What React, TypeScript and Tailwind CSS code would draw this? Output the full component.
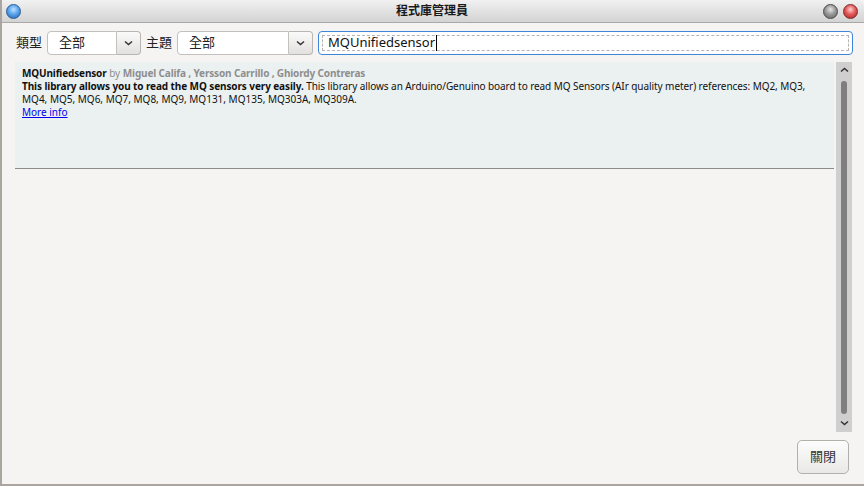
import React from "react";

const CJK = "font-['Noto_Sans','Noto_Sans_CJK_TC',sans-serif]";

function Orb({ tone }: { tone: "blue" | "gray" | "red" }) {
  const fill =
    tone === "blue"
      ? "bg-[radial-gradient(circle_at_50%_35%,#bfe0ff_0%,#5aa6ec_45%,#1d5fae_100%)] border-[#2b5d95]"
      : tone === "red"
        ? "bg-[radial-gradient(circle_at_50%_35%,#ffd0d0_0%,#e45a5a_45%,#a81d1d_100%)] border-[#7a2a2a]"
        : "bg-[radial-gradient(circle_at_50%_35%,#e6e6e6_0%,#9a9a9a_45%,#5e5e5e_100%)] border-[#4a4a4a]";
  return <div className={`h-[15px] w-[15px] rounded-full border ${fill}`} />;
}

function Chevron({ up = false }: { up?: boolean }) {
  return (
    <svg width="9" height="6" viewBox="0 0 9 6" className={up ? "rotate-180" : ""}>
      <path d="M1 1.5 L4.5 4.5 L8 1.5" fill="none" stroke="#333" strokeWidth="1.5" />
    </svg>
  );
}

function Combo({ width, value }: { width: string; value: string }) {
  return (
    <div className="flex h-[24px] items-stretch">
      <div
        className={`${width} flex items-center rounded-l-[4px] border border-[#c4c1bc] bg-white pl-[11px] text-[13px] text-[#222]`}
      >
        {value}
      </div>
      <div className="flex w-[24px] items-center justify-center rounded-r-[4px] border border-l-0 border-[#b9b6b1] bg-gradient-to-b from-[#fafafa] to-[#e2e1df]">
        <Chevron />
      </div>
    </div>
  );
}

export default function App() {
  return (
    <div className={`flex h-[486px] w-[864px] flex-col border-b-2 border-l-2 border-[#aaa59f] bg-[#f5f4f2] ${CJK}`}>
      <div className="grid h-[23px] grid-cols-[1fr_auto_1fr] items-center rounded-tr-[6px] border-b border-[#a9a9a9] bg-gradient-to-b from-[#f1f1f1] to-[#d3d3d3] pl-[4px] pr-[6px]">
        <Orb tone="blue" />
        <span className="text-[12px] font-bold text-[#1a1a1a]">程式庫管理員</span>
        <div className="flex justify-end gap-[5px]">
          <Orb tone="gray" />
          <Orb tone="red" />
        </div>
      </div>

      <div className="mt-[8px] flex items-center pl-[14px] pr-[11px]">
        <span className="mr-[5px] text-[13px] text-[#222]">類型</span>
        <Combo width="w-[70px]" value="全部" />
        <span className="ml-[5px] mr-[5px] text-[13px] text-[#222]">主題</span>
        <Combo width="w-[112px]" value="全部" />
        <div className="ml-[5px] flex h-[24px] flex-1 items-center rounded-[4px] border border-[#3d86d9] bg-white p-[3px]">
          <div className="flex h-[16px] flex-1 items-center border border-dashed border-[#b4b4b4] pl-[5px] text-[13px] text-[#111]">
            MQUnifiedsensor
            <span className="ml-[1px] h-[16px] w-[1px] bg-black" />
          </div>
        </div>
      </div>

      <div className="mt-[7px] flex h-[370px] pl-[13px] pr-[12px]">
        <div className="flex-1 pr-[2px]">
          <div className="h-[107px] border-b border-[#8c8c8c] bg-[#ebf0f0] pl-[7px] pt-[5px] text-[10px] leading-[13px] text-[#111] font-['Noto_Sans',sans-serif]">
            <div>
              <b className="tracking-[-0.15px]">MQUnifiedsensor</b> <span className="text-[#8e8e8e]">by</span>{" "}
              <b className="tracking-[-0.15px] text-[#8e8e8e]">Miguel Califa , Yersson Carrillo , Ghiordy Contreras</b>
            </div>
            <div>
              <b className="tracking-[-0.1px]">This library allows you to read the MQ sensors very easily.</b>{" "}
              <span className="tracking-[-0.07px]">
                This library allows an Arduino/Genuino board to read MQ Sensors (AIr quality meter) references: MQ2,
                MQ3,
              </span>
            </div>
            <div>MQ4, MQ5, MQ6, MQ7, MQ8, MQ9, MQ131, MQ135, MQ303A, MQ309A.</div>
            <div className="text-[#0000ee] underline">More info</div>
          </div>
        </div>
        <div className="flex w-[16px] flex-col items-center bg-[#cfcfcf]">
          <div className="flex h-[16px] items-center">
            <Chevron up />
          </div>
          <div className="mt-[3px] w-[6px] flex-1 rounded-[3px] bg-[#7f7f7f]" />
          <div className="flex h-[18px] items-center">
            <Chevron />
          </div>
        </div>
      </div>

      <div className="mt-[8px] flex justify-end pr-[15px]">
        <button className="flex h-[34px] w-[52px] items-center justify-center rounded-[5px] border border-[#b3b0ab] bg-gradient-to-b from-[#fdfdfd] to-[#e9e8e6] text-[13px] text-[#333]">
          關閉
        </button>
      </div>
    </div>
  );
}
